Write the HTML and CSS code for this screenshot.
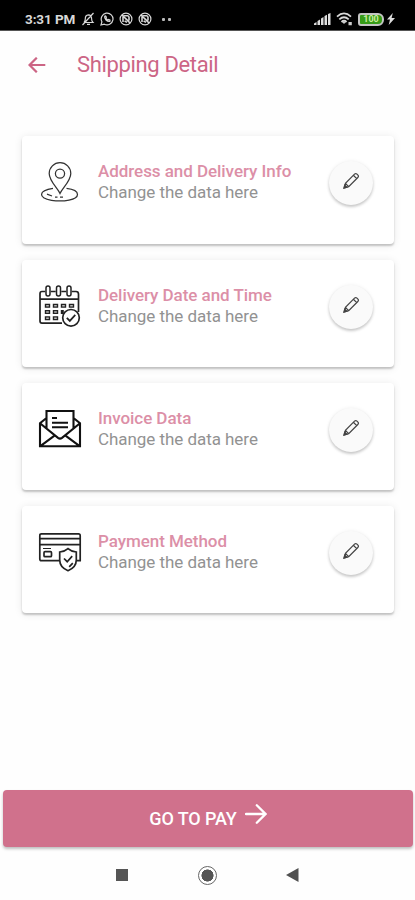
FILE: index.html
```html
<!DOCTYPE html>
<html lang="en">
<head>
<meta charset="utf-8">
<title>Shipping Detail</title>
<link rel="stylesheet" href="styles.css">
</head>
<body>
<svg class="defs" width="0" height="0">
  <symbol id="pencil" viewBox="0 0 18 18"><path d="M1.3 16.7 2.6 12 12.2 2.3Q13.5 1 14.8 2.3L15.8 3.3Q17 4.6 15.7 5.8L6 15.5ZM2.6 12 6 15.5M11 3.5l3.5 3.5"/><path class="tip" d="m1 17 .8-3 2.2 2.2Z"/></symbol>
  <symbol id="chat-off" viewBox="0 0 14 14"><circle cx="7" cy="7" r="5.9"/><path d="M4 10V5.3Q4 3.7 5.6 3.7H8.5Q10 3.8 10 5.2V8.4M3 3l8 8M6.2 6.2 10 9.8M5.6 8.8 8 10.4" stroke-width="1.6"/></symbol>
</svg>
<div class="screen">
  <div class="status">
    <span class="time">3:31 PM</span>
    <svg class="s-icon bell" viewBox="0 0 14 14"><path d="M3 10.3Q4.3 9 4.3 6.7 4.2 3.1 7.4 2.8 10.6 3 10.6 6.7 10.6 9 12 10.5H3M6 12.3h3M12.5 1 1.5 13"/></svg>
    <svg class="s-icon whats" viewBox="0 0 14 14"><path d="M1 13 1.9 9.8A5.9 5.9 0 1 1 4.3 12.2Z"/><path d="M4.7 4.2Q4.2 6.3 6 8T9.8 9.4L10 8.2 8.6 7.5 7.9 8.1 5.8 6.1 6.4 5.3 5.6 4Z"/></svg>
    <svg class="s-icon chat"><use href="#chat-off"/></svg>
    <svg class="s-icon chat"><use href="#chat-off"/></svg>
    <span class="dots"><i></i><i></i></span>
    <svg class="signal" viewBox="0 0 17 12"><path d="M0 12V10.5L2.5 9v3ZM3.5 12V8L6 6.5V12ZM7 12V5.5L9.5 4v8ZM10.5 12V3L13 1.7V12ZM14 12V1l2.5-1v12Z"/></svg>
    <svg class="wifi" viewBox="0 0 17 14"><path d="M1 4.6Q8 -1.8 15 4.6M3.3 7.4Q8 3.2 12.7 7.4M5.5 10Q8 7.6 10.5 10"/><path class="solid" d="m6.3 10.2 1.7 1.9 1.7-1.9Q8 9 6.3 10.2ZM12.5 10h3.3v3.3h-3.3Z"/></svg>
    <span class="battery"><b>100</b></span>
    <svg class="bolt" viewBox="0 0 8 12"><path d="M5.8 0 0 6.5h3L1.7 12 8 5H4.6Z"/></svg>
  </div>
  <header class="topbar">
    <svg class="back" viewBox="0 0 18 16"><path d="M17.3 8H2M8.8 .7 1.5 8l7.3 7.3"/></svg>
    <h1>Shipping Detail</h1>
  </header>
  <main class="cards">
    <section class="card">
      <svg class="pic thin" viewBox="0 0 44 44"><path d="M22 32.5C19.5 27 11.2 20 11.2 12.5a10.8 10.8 0 0 1 21.6 0C32.8 20 24.5 27 22 32.5Z"/><circle cx="22" cy="12.6" r="4.6"/><path d="M15 27.3C0 29.5 0 37 13.5 39.3 25.5 41.2 39.5 38.8 39.5 33.5 39.5 30 35 28 28.5 27.3M9 33.2l5 1.8M17 36h2.5M22 36h3"/></svg>
      <div class="info"><h2>Address and Delivery Info</h2><p>Change the data here</p></div>
      <button class="edit"><svg><use href="#pencil"/></svg></button>
    </section>
    <section class="card">
      <svg class="pic calendar" viewBox="0 0 44 44"><path d="M7.3 6.5H4Q2 6.5 2 8.7V36Q2 38.2 4 38.2H24M12.7 6.5h5M23.3 6.5h5M33.7 6.5H38Q40.5 6.5 40.5 9V27M2 14.2h38.5"/><g class="rings"><rect x="8" y="1" width="4" height="10" rx="2"/><rect x="18.5" y="1" width="4" height="10" rx="2"/><rect x="29" y="1" width="4" height="10" rx="2"/></g><path class="days" d="M6.8 20.8h5.4M14.8 20.8h5.4M22.8 20.8h5.4M30.8 20.8h5.4M6.8 27h5.4M14.8 27h5.4M22.8 27h3M6.8 33.2h5.4M14.8 33.2h5.4"/><path class="holes" d="M8.2 20.8h2.6M16.2 20.8h2.6M24.2 20.8h2.6M32.2 20.8h2.6M8.2 27h2.6M16.2 27h2.6M8.2 33.2h2.6M16.2 33.2h2.6"/><circle class="white" cx="33" cy="32.8" r="8.3"/><path d="m28.8 32.8 3 3.1 5.5-6"/></svg>
      <div class="info"><h2>Delivery Date and Time</h2><p>Change the data here</p></div>
      <button class="edit"><svg><use href="#pencil"/></svg></button>
    </section>
    <section class="card">
      <svg class="pic mail" viewBox="0 0 44 44"><path d="M8.5 10 2 15.2V38.3H42V15.2L35.5 10M2 15.2l18 14.7q2 1.4 4 0L42 15.2M2 38.3l14.5-10.7M42 38.3 27.5 27.6M8.5 20.5V3H35.5V20.5"/><path d="M14 10h5M14 14.8h16M14 19.2h16"/></svg>
      <div class="info"><h2>Invoice Data</h2><p>Change the data here</p></div>
      <button class="edit"><svg><use href="#pencil"/></svg></button>
    </section>
    <section class="card">
      <svg class="pic payment" viewBox="0 0 44 44"><path d="M22 29.7H3.5Q1.8 29.7 1.8 28V4.5Q1.8 2.8 3.5 2.8H40.5Q42.2 2.8 42.2 4.5V29.7H38M1.8 7.7H42M1.8 13.7H42"/><path class="fine" d="M5 17.5h8"/><rect x="6" y="20.7" width="7.5" height="5" rx="1"/><path class="white" d="M30 17.7Q33 20.5 38.3 21V29Q38.3 36.3 30 39.7 21.7 36.3 21.7 29V21Q27 20.5 30 17.7Z"/><path d="m26 27.5 3.2 3.2 5-5.6M31.2 35.8l3.6-3.6"/></svg>
      <div class="info"><h2>Payment Method</h2><p>Change the data here</p></div>
      <button class="edit"><svg><use href="#pencil"/></svg></button>
    </section>
  </main>
  <button class="pay"><span>GO TO PAY</span><svg viewBox="0 0 22 20"><path d="M1 10H20M11.8 1.3 20.5 10l-8.7 8.7"/></svg></button>
  <nav class="nav">
    <i class="square"></i><i class="home"></i>
    <svg class="triangle" viewBox="0 0 13 14"><path d="M0 7 12.5 0v14Z"/></svg>
  </nav>
</div>
</body>
</html>
```

FILE: styles.css
```css
* { box-sizing: border-box; }
body { margin: 0; background: #fefefe; font-family: Roboto, "Liberation Sans", sans-serif; }
h1, h2, p { margin: 0; }
button { border: 0; padding: 0; font: inherit; }
svg { fill: none; stroke: currentColor; flex: none; }
.defs { display: none; }
.screen { width: 415px; height: 900px; overflow: hidden; display: flex; flex-direction: column; }

.status { height: 31px; flex: none; background: #000; border-bottom: 1px solid #555; color: #d8d8d8; display: flex; align-items: center; padding: 8px 20px 0 25px; }
.time { width: 50px; font-size: 13.5px; font-weight: 700; line-height: 16px; white-space: nowrap; letter-spacing: -.1px; }
.s-icon { width: 14px; height: 14px; stroke-width: 1.2; }
.bell { margin-left: 6px; }
.whats { margin-left: 5px; }
.chat { margin-left: 5px; }
.chat + .dots { margin-left: 10px; }
.dots { display: flex; gap: 3px; }
.dots i { width: 3px; height: 3px; background: #bbb; border-radius: 1px; }
.signal { width: 17px; height: 12px; margin-left: auto; fill: #ddd; stroke: none; }
.wifi { width: 17px; height: 14px; margin-left: 5px; stroke-width: 1.8; }
.solid { fill: #ccc; stroke: none; }
.battery { width: 26px; height: 13px; margin-left: 5px; border: 2px solid #c4c4c4; border-radius: 3px 6px 6px 3px; background: #369b17; display: flex; align-items: center; justify-content: center; }
.battery b { font-size: 9px; line-height: 9px; color: #c8ef9f; }
.bolt { width: 8px; height: 12px; margin-left: 3px; fill: #ddd; stroke: none; }

.topbar { height: 105px; flex: none; display: flex; align-items: flex-start; padding: 20px 28px 0; color: #cc6585; }
.back { width: 18px; height: 16px; margin-top: 6px; stroke-width: 2.2; }
h1 { margin-left: 31px; font-size: 22px; line-height: 28px; font-weight: 400; letter-spacing: -.35px; white-space: nowrap; }

.cards { height: 654px; flex: none; padding: .3px 21px 0 22px; display: flex; flex-direction: column; gap: 16px; }
.card { height: 107.3px; flex: none; border-radius: 4px; background: #fff; box-shadow: 0 2px 2px rgba(0,0,0,.2), 0 1px 9px rgba(0,0,0,.09); display: flex; align-items: flex-start; padding: 25px 21px 0 16px; }
.pic { width: 44px; height: 44px; color: #222; stroke-width: 1.7; }
.thin { stroke-width: 1.25; color: #333; }
.rings { stroke-width: 1.5; }
.days { stroke-width: 4; }
.holes { stroke: #bbb; stroke-width: 1.4; }
.white { fill: #fff; }
.mail { stroke-width: 2.1; color: #111; }
.fine { stroke-width: 1; }
.info { flex: 1; margin-left: 16px; white-space: nowrap; letter-spacing: -.05px; }
h2 { font-size: 17px; line-height: 21px; font-weight: 500; color: #dc8fa7; }
p { font-size: 17px; line-height: 21px; color: #929292; }
.edit { width: 44px; height: 44px; border-radius: 50%; background: #fafafa; box-shadow: 0 2px 3px rgba(0,0,0,.2), 0 0 4px rgba(0,0,0,.06); color: #444; display: flex; align-items: center; justify-content: center; }
.edit svg { width: 17px; height: 17px; margin-top: -5px; stroke-width: 1.3; }
.tip { fill: #333; }

.pay { height: 57px; flex: none; margin: 0 2px 0 3px; border-radius: 4px; background: #d0718c; box-shadow: 0 2px 3px rgba(0,0,0,.25); color: #fff; display: flex; align-items: center; padding-left: 146px; font-size: 18px; font-weight: 500; white-space: nowrap; letter-spacing: -.1px; }
.pay span { width: 88px; }
.pay svg { width: 22px; height: 20px; margin: -10px 0 0 8px; stroke-width: 2.3; stroke-linecap: round; }

.nav { height: 53px; flex: none; display: flex; align-items: center; padding: 3px 0 0 116px; color: #505050; }
.square { width: 12px; height: 12px; background: #555; }
.home { width: 19px; height: 19px; margin-left: 70px; border-radius: 50%; border: 1.5px solid #666; background: radial-gradient(circle, #555 0 5.8px, #fff 6.3px); }
.triangle { width: 13px; height: 14px; margin-left: 69px; fill: #505050; stroke: none; }
```
